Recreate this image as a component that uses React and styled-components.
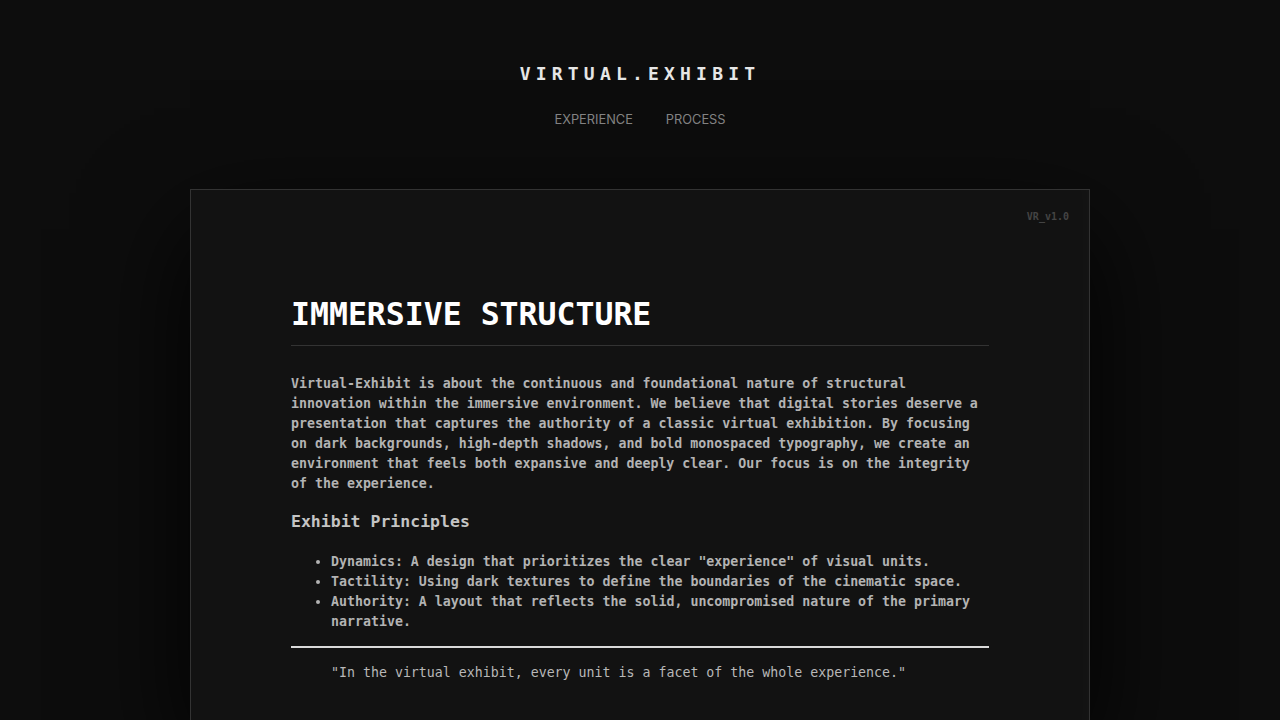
import styled, { createGlobalStyle } from "styled-components";

const GlobalStyle = createGlobalStyle`
  html, body {
    margin: 0;
    padding: 0;
    background: #0d0d0d;
  }
  body {
    font-family: "DejaVu Sans Mono", "Liberation Mono", monospace;
    color: #b0b0b0;
  }
`;

const Page = styled.div`
  min-height: 100vh;
  display: flex;
  flex-direction: column;
  align-items: center;
`;

const Header = styled.header`
  padding-top: 60px;
  display: flex;
  flex-direction: column;
  align-items: center;
`;

const Brand = styled.div`
  font-family: "DejaVu Sans Mono", monospace;
  font-size: 18px;
  line-height: 28px;
  font-weight: 700;
  letter-spacing: 5.2px;
  color: #e6e6e6;
`;

const Nav = styled.nav`
  margin-top: 22px;
  display: flex;
  gap: 33px;
`;

const NavLink = styled.a`
  font-family: Inter, "Noto Sans", sans-serif;
  font-size: 12.8px;
  line-height: 20px;
  color: #858585;
  text-decoration: none;
`;

const Card = styled.main`
  position: relative;
  box-sizing: border-box;
  width: 900px;
  margin-top: 59px;
  padding: 104px 100px 40px;
  background: #121212;
  border: 1px solid #333;
  box-shadow: 0 40px 100px rgba(0, 0, 0, 0.95), inset -14px 0 18px -10px rgba(255, 255, 255, 0.02);
`;

const Version = styled.span`
  position: absolute;
  top: 20px;
  right: 20px;
  font-size: 10px;
  line-height: 14px;
  font-weight: 700;
  color: #444;
`;

const Title = styled.h1`
  margin: 0;
  padding-bottom: 11px;
  border-bottom: 1px solid #333;
  font-size: 31.5px;
  line-height: 40px;
  font-weight: 700;
  color: #fff;
`;

const Paragraph = styled.p`
  margin: 28px 0 0;
  font-size: 13.28px;
  line-height: 20px;
  font-weight: 700;
  color: #b3b3b3;
`;

const Subtitle = styled.h3`
  margin: 14px 0 0;
  font-size: 16.5px;
  line-height: 28px;
  font-weight: 700;
  color: #c4c4c4;
`;

const List = styled.ul`
  margin: 16px 0 0;
  padding-left: 40px;
`;

const Item = styled.li`
  font-size: 13.28px;
  line-height: 20px;
  font-weight: 700;
  color: #b3b3b3;
`;

const Rule = styled.hr`
  margin: 14px 0 0;
  border: none;
  height: 2px;
  background: #d9d9d9;
`;

const Quote = styled.blockquote`
  margin: 15px 0 0;
  padding-left: 40px;
  font-size: 13.28px;
  line-height: 20px;
  color: #b8b8b8;
`;

const App = () => {
  return (
    <>
      <GlobalStyle />
      <Page>
        <Header>
          <Brand>VIRTUAL.EXHIBIT</Brand>
          <Nav>
            <NavLink href="#">EXPERIENCE</NavLink>
            <NavLink href="#">PROCESS</NavLink>
          </Nav>
        </Header>
        <Card>
          <Version>VR_v1.0</Version>
          <Title>IMMERSIVE STRUCTURE</Title>
          <Paragraph>
            Virtual-Exhibit is about the continuous and foundational nature of structural
            innovation within the immersive environment. We believe that digital stories deserve a
            presentation that captures the authority of a classic virtual exhibition. By focusing
            on dark backgrounds, high-depth shadows, and bold monospaced typography, we create an
            environment that feels both expansive and deeply clear. Our focus is on the integrity
            of the experience.
          </Paragraph>
          <Subtitle>Exhibit Principles</Subtitle>
          <List>
            <Item>Dynamics: A design that prioritizes the clear "experience" of visual units.</Item>
            <Item>Tactility: Using dark textures to define the boundaries of the cinematic space.</Item>
            <Item>
              Authority: A layout that reflects the solid, uncompromised nature of the primary
              narrative.
            </Item>
          </List>
          <Rule />
          <Quote>"In the virtual exhibit, every unit is a facet of the whole experience."</Quote>
        </Card>
      </Page>
    </>
  );
};

export default App;
